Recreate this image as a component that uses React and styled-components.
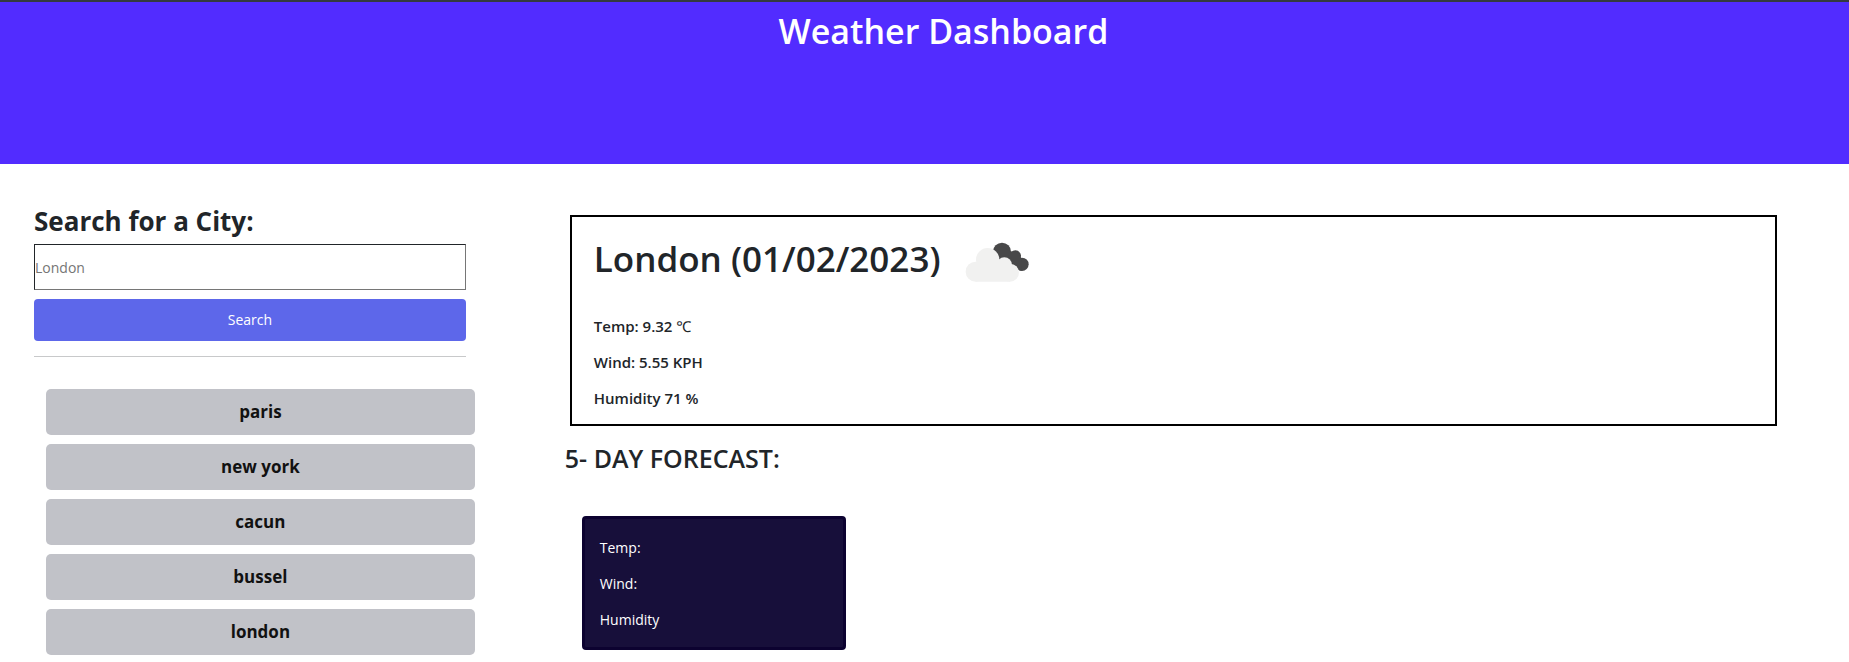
import React, { useState } from "react";
import styled, { createGlobalStyle } from "styled-components";

const GlobalStyle = createGlobalStyle`
  *, *::before, *::after { box-sizing: border-box; }
  body {
    margin: 0;
    background: #fff;
    color: #212529;
    font-family: "Segoe UI", "Open Sans", "Noto Sans", sans-serif;
    font-size: 14px;
    line-height: 24px;
  }
`;

const Header = styled.header`
  min-height: 164px;
  padding: 0 0 0 38px;
  border-top: 2px solid #343a40;
  background: #522cff;
  color: #fff;
  text-align: center;
`;

const PageTitle = styled.h1`
  margin: 0;
  padding-top: 3px;
  font-size: 34px;
  font-weight: 600;
  line-height: 52px;
`;

const Content = styled.div`
  display: grid;
  grid-template-columns: minmax(0, 4fr) minmax(0, 11fr);
  column-gap: 90px;
  padding: 40px 72px 0 34px;
`;

const SearchForm = styled.form`
  display: flex;
  flex-direction: column;
  margin-right: 9px;
`;

const SearchLabel = styled.label`
  padding-bottom: 6px;
  font-size: 26px;
  font-weight: 700;
  line-height: 34px;
`;

const SearchInput = styled.input`
  width: 100%;
  height: 46px;
  padding: 0;
  border: 1px solid;
  border-color: #212529 #767676 #767676 #212529;
  background: #fff;
  color: #212529;
  font: inherit;

  &::placeholder { color: #757575; opacity: 1; }
`;

const SearchButton = styled.button`
  height: 42px;
  margin-top: 9px;
  padding: 0;
  border: 0;
  border-radius: 4px;
  background: #5d67ea;
  color: #fff;
  font: inherit;
`;

const Divider = styled.hr`
  width: 100%;
  height: 1px;
  margin: 15px 0 32px;
  border: 0;
  background: #c8c9ca;
`;

const History = styled.div`
  display: grid;
  gap: 9px;
  margin-left: 12px;
`;

const HistoryButton = styled.button`
  height: 46px;
  padding: 0;
  border: 0;
  border-radius: 5px;
  background: #c1c2c8;
  color: #111;
  font: inherit;
  font-size: 17px;
  font-weight: 700;
`;

const Today = styled.section`
  margin: 11px 0 0 5px;
  padding: 16px 22px 14px;
  border: 2px solid #000;
`;

const TodayHeading = styled.div`
  display: flex;
  align-items: center;
  gap: 24px;
  margin-bottom: 29px;
`;

const CityName = styled.h2`
  margin: 0;
  font-size: 35px;
  font-weight: 600;
  line-height: 52px;
`;

const Reading = styled.p`
  margin: 0;
  font-size: ${(p) => (p.$strong ? 15 : 14)}px;
  line-height: 24px;
  font-weight: ${(p) => (p.$strong ? 600 : 400)};

  & + & { margin-top: 12px; }
`;

const Unit = styled.span`
  font-weight: 400;
`;

const ForecastTitle = styled.h3`
  margin: 14px 0 0;
  font-size: 25px;
  font-weight: 600;
  line-height: 36px;
`;

const ForecastGrid = styled.div`
  display: flex;
  flex-wrap: wrap;
  gap: 16px;
  padding: 40px 17px 0;
`;

const DayCard = styled.article`
  flex: 0 0 264px;
  padding: 17px 15px 15px;
  border: 3px solid #0c0230;
  border-radius: 4px;
  background: #170f3a;
  color: #fff;
`;

const CloudIcon = () => (
  <svg width="66" height="48" viewBox="30 17 198 144" role="img" aria-label="Broken clouds">
    <g fill="#484849">
      <circle cx="144" cy="67" r="27" />
      <circle cx="184" cy="80" r="17" />
      <circle cx="204" cy="105" r="20" />
      <path d="M118 60L144 50L168 66L190 68L204 90L203 125L176 116L135 98Z" />
    </g>
    <g fill="#f1f1f0">
      <circle cx="65" cy="127" r="30" />
      <circle cx="101" cy="91" r="35" />
      <circle cx="151" cy="107" r="23" />
      <circle cx="168" cy="130" r="27" />
      <path d="M65 157H168V105H65Z" />
    </g>
  </svg>
);

const cities = ["paris", "new york", "cacun", "bussel", "london"];

export default function App() {
  const [city, setCity] = useState("");
  return (
    <>
      <GlobalStyle />
      <Header>
        <PageTitle>Weather Dashboard</PageTitle>
      </Header>
      <Content>
        <aside>
          <SearchForm onSubmit={(e) => e.preventDefault()}>
            <SearchLabel htmlFor="city">Search for a City:</SearchLabel>
            <SearchInput
              id="city"
              type="text"
              placeholder="London"
              value={city}
              onChange={(e) => setCity(e.target.value)}
            />
            <SearchButton type="submit">Search</SearchButton>
            <Divider />
          </SearchForm>
          <History>
            {cities.map((name) => (
              <HistoryButton key={name} type="button" onClick={() => setCity(name)}>
                {name}
              </HistoryButton>
            ))}
          </History>
        </aside>
        <main>
          <Today>
            <TodayHeading>
              <CityName>London (01/02/2023)</CityName>
              <CloudIcon />
            </TodayHeading>
            <Reading $strong>Temp: 9.32 <Unit>℃</Unit></Reading>
            <Reading $strong>Wind: 5.55 KPH</Reading>
            <Reading $strong>Humidity 71 %</Reading>
          </Today>
          <ForecastTitle>5- DAY FORECAST:</ForecastTitle>
          <ForecastGrid>
            <DayCard>
              <Reading>Temp:</Reading>
              <Reading>Wind:</Reading>
              <Reading>Humidity</Reading>
            </DayCard>
          </ForecastGrid>
        </main>
      </Content>
    </>
  );
}
